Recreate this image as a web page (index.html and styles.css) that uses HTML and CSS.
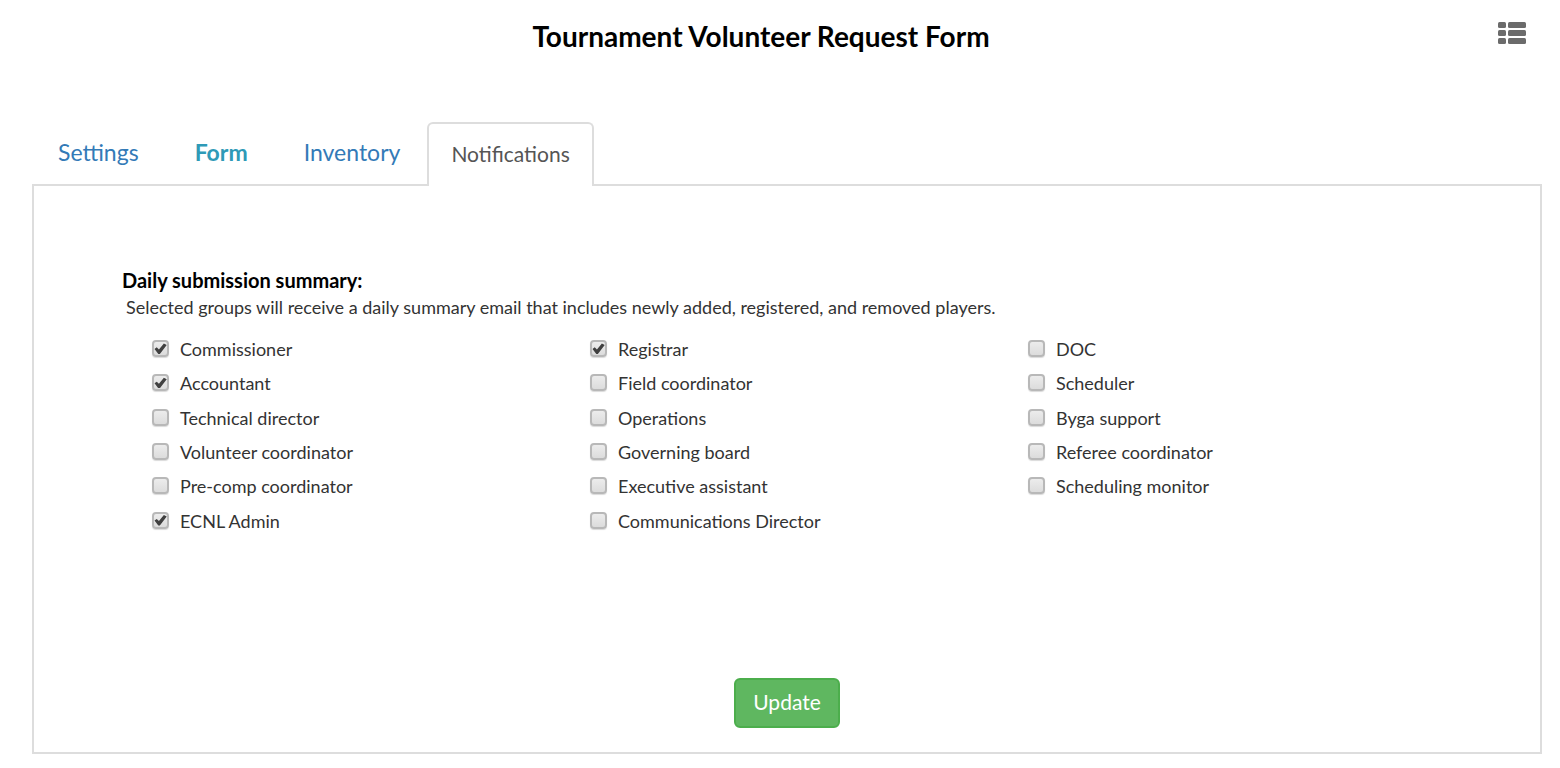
FILE: index.html
```html
<!DOCTYPE html>
<html lang="en">
<head>
    <meta charset="UTF-8">
    <meta name="viewport" content="width=device-width, initial-scale=1.0">
    <title>Tournament Volunteer Request Form</title>
    <link rel="stylesheet" href="styles.css">
</head>
<body>
    <header class="page-header">
        <h1>Tournament Volunteer Request Form</h1>
        <button type="button" class="menu-button" aria-label="List">
            <svg width="28" height="22" viewBox="0 0 28 22" fill="#6b6b6b">
                <rect x="0" y="0" width="8" height="6" rx="1.5"/>
                <rect x="10" y="0" width="18" height="6" rx="1.5"/>
                <rect x="0" y="8" width="8" height="6" rx="1.5"/>
                <rect x="10" y="8" width="18" height="6" rx="1.5"/>
                <rect x="0" y="16" width="8" height="6" rx="1.5"/>
                <rect x="10" y="16" width="18" height="6" rx="1.5"/>
            </svg>
        </button>
    </header>

    <nav class="tabs">
        <a href="#settings">Settings</a>
        <a href="#form" class="highlight">Form</a>
        <a href="#inventory">Inventory</a>
        <a href="#notifications" class="active">Notifications</a>
    </nav>

    <form class="panel">
        <div class="summary">
            <h2>Daily submission summary:</h2>
            <p>Selected groups will receive a daily summary email that includes newly added, registered, and removed players.</p>

            <div class="groups">
                <label><input type="checkbox" checked> Commissioner</label>
                <label><input type="checkbox" checked> Registrar</label>
                <label><input type="checkbox"> DOC</label>
                <label><input type="checkbox" checked> Accountant</label>
                <label><input type="checkbox"> Field coordinator</label>
                <label><input type="checkbox"> Scheduler</label>
                <label><input type="checkbox"> Technical director</label>
                <label><input type="checkbox"> Operations</label>
                <label><input type="checkbox"> Byga support</label>
                <label><input type="checkbox"> Volunteer coordinator</label>
                <label><input type="checkbox"> Governing board</label>
                <label><input type="checkbox"> Referee coordinator</label>
                <label><input type="checkbox"> Pre-comp coordinator</label>
                <label><input type="checkbox"> Executive assistant</label>
                <label><input type="checkbox"> Scheduling monitor</label>
                <label><input type="checkbox" checked> ECNL Admin</label>
                <label><input type="checkbox"> Communications Director</label>
            </div>
        </div>

        <button type="submit" class="update-button">Update</button>
    </form>
</body>
</html>
```
FILE: styles.css
```css
/* General Styles */
* {
    box-sizing: border-box;
}

body {
    margin: 0;
    background: #fff;
    color: #333;
    font-family: Lato, "Liberation Sans", sans-serif;
    font-size: 18px;
}

/* Header */
.page-header {
    display: flex;
    align-items: flex-start;
    padding: 19px 34px 0 24px;
}

h1 {
    flex: 1;
    margin: 0;
    color: #000;
    font-size: 28px;
    line-height: 34px;
    font-weight: bold;
    text-align: center;
}

.menu-button {
    margin: 3px 0 0;
    padding: 0;
    border: none;
    background: none;
    cursor: pointer;
}

.menu-button svg {
    display: block;
}

/* Tabs */
.tabs {
    display: flex;
    align-items: flex-end;
    margin: 67px 18px 0 32px;
}

.tabs a {
    padding: 16px 28px;
    color: #337ab7;
    font-size: 23px;
    line-height: 32px;
    text-decoration: none;
}

.tabs a:first-child {
    padding-left: 26px;
}

.tabs .highlight {
    color: #2e9ab7;
    font-weight: bold;
}

.tabs .active {
    margin: 0 0 -2px -1px;
    padding: 14px 22px 16px;
    border: 2px solid #ddd;
    border-bottom: none;
    border-radius: 6px 6px 0 0;
    background: #fff;
    color: #555;
    font-size: 21px;
    z-index: 1;
}

/* Notifications Panel */
.panel {
    margin: 0 18px 14px 32px;
    padding: 80px 74px 24px;
    border: 2px solid #ddd;
}

.summary {
    padding-left: 14px;
}

h2 {
    margin: 0;
    color: #000;
    font-size: 20px;
    line-height: 28px;
    font-weight: bold;
}

.panel p {
    margin: 0;
    padding-left: 4px;
    line-height: 26px;
}

.groups {
    display: grid;
    grid-template-columns: repeat(3, 1fr);
    grid-auto-rows: 1fr;
    min-height: 206px;
    margin: 12px 0 140px 30px;
}

.groups label {
    display: flex;
    align-items: center;
}

/* Check Boxes */
input[type="checkbox"] {
    appearance: none;
    display: grid;
    place-items: center;
    width: 17px;
    height: 17px;
    margin: 0 11px 1px 0;
    border: 2px solid #b8b8b8;
    border-radius: 4px;
    background: linear-gradient(#ececec, #dcdcdc);
    box-shadow: 0 1px 1px rgba(0, 0, 0, 0.15);
}

input[type="checkbox"]:checked::before {
    content: "";
    width: 13px;
    height: 11px;
    background: #404040;
    clip-path: polygon(4% 52%, 21% 38%, 38% 57%, 76% 2%, 98% 16%, 45% 98%, 33% 98%);
}

/* Button */
.update-button {
    display: block;
    width: 106px;
    height: 50px;
    margin: 0 auto;
    padding: 0 0 3px;
    border: 2px solid #4cae4c;
    border-radius: 6px;
    background: #5fb760;
    color: #fff;
    font-family: inherit;
    font-size: 21px;
    cursor: pointer;
}
```
